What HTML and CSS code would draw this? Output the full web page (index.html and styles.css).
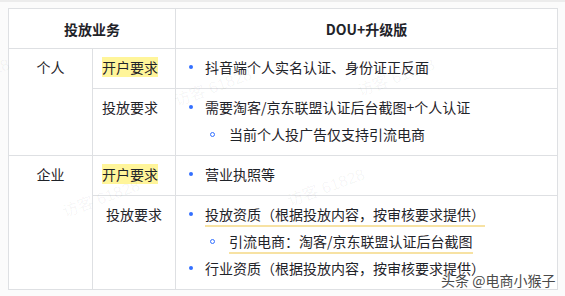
FILE: index.html
```html
<!DOCTYPE html>
<html lang="zh">
<head>
<meta charset="utf-8">
<link rel="stylesheet" href="styles.css">
</head>
<body>
<div class="wrap">
<table class="grid">
  <colgroup><col class="c1"><col class="c2"><col class="c3"></colgroup>
  <thead>
    <tr class="r-head"><th colspan="2">投放业务</th><th>DOU+升级版</th></tr>
  </thead>
  <tbody>
    <tr class="r-short">
      <td class="who" rowspan="2">个人</td>
      <td class="lab"><span class="hl">开户要求</span></td>
      <td class="cnt"><ul class="list"><li>抖音端个人实名认证、身份证正反面</li></ul></td>
    </tr>
    <tr class="r-mid">
      <td class="lab">投放要求</td>
      <td class="cnt"><ul class="list"><li>需要淘客/京东联盟认证后台截图+个人认证
        <ul class="sub"><li>当前个人投广告仅支持引流电商</li></ul></li></ul></td>
    </tr>
    <tr class="r-short">
      <td class="who" rowspan="2">企业</td>
      <td class="lab"><span class="hl">开户要求</span></td>
      <td class="cnt"><ul class="list"><li>营业执照等</li></ul></td>
    </tr>
    <tr class="r-long">
      <td class="lab lab-in">投放要求</td>
      <td class="cnt"><ul class="list">
        <li><span class="ul">投放资质（根据投放内容，按审核要求提供）</span>
          <ul class="sub"><li><span class="ul">引流电商：淘客/京东联盟认证后台截图</span></li></ul></li>
        <li>行业资质（根据投放内容，按审核要求提供）</li>
      </ul></td>
    </tr>
  </tbody>
</table>
<span class="wm wm1">访客 61828</span>
<span class="wm wm2">访客 61828</span>
<span class="wm wm3">访客 61828</span>
<span class="wm wm4">访客 61828</span>
<span class="wm wm5">访客 61828</span>
<span class="brand">头条 @电商小猴子</span>
</div>
</body>
</html>
```
FILE: styles.css
```css
html, body {
  margin: 0;
  padding: 0;
}
body {
  background: #fbfbfb;
  border-top: 2px solid #ececec;
  height: 294px;
  overflow: hidden;
  font-family: "Noto Sans CJK SC", "Noto Sans", sans-serif;
  font-size: 14px;
  color: #1f2329;
}
.wrap {
  position: relative;
  padding: 6px 0 0 8px;
}
.grid {
  border-collapse: collapse;
  table-layout: fixed;
  width: 549px;
  background: #fff;
}
.c1 { width: 84px; }
.c2 { width: 83px; }
.c3 { width: 382px; }
.grid th, .grid td {
  border: 1px solid #dee0e3;
  padding: 0;
  line-height: 26px;
}
.grid th {
  font-weight: 700;
  text-align: center;
  height: 39px;
  color: #1f2329;
}
.grid td {
  vertical-align: top;
  padding-top: 5px;
}
.r-short td { height: 34px; }
.r-mid td { height: 61px; }
.r-long td { height: 88px; }
.who {
  text-align: center;
}
.grid td.lab {
  padding-left: 9px;
}
.grid td.lab-in { padding-left: 13px; }
.hl {
  background: #fff59a;
}
.list, .sub {
  list-style: none;
  margin: 0;
  padding: 0;
}
.list > li {
  position: relative;
  padding-left: 29px;
}
.list > li::before {
  content: "";
  position: absolute;
  left: 13px;
  top: 11px;
  width: 4px;
  height: 4px;
  border-radius: 50%;
  background: #3370ff;
}
.sub > li {
  position: relative;
  padding-left: 24px;
  margin-top: 1px;
}
.sub > li::before {
  content: "";
  position: absolute;
  left: 5px;
  top: 11px;
  width: 3px;
  height: 3px;
  border-radius: 50%;
  border: 1px solid #3370ff;
  background: #fff;
}
.list > li + li {
  margin-top: 1px;
}
.ul {
  border-bottom: 2px solid #f7e2a3;
  padding-bottom: 1px;
}
.wm {
  position: absolute;
  font-family: "Liberation Sans", "Noto Sans CJK SC", sans-serif;
  font-size: 16px;
  color: rgba(0, 0, 0, 0.045);
  transform: rotate(-20deg);
  white-space: nowrap;
  pointer-events: none;
}
.wm1 { left: 355px; top: 62px; }
.wm2 { left: 60px; top: 183px; }
.wm3 { left: 285px; top: 172px; }
.wm4 { left: -70px; top: 62px; }
.wm5 { left: 172px; top: 72px; }
.brand {
  position: absolute;
  left: 441px;
  top: 268px;
  font-size: 14px;
  line-height: 20px;
  color: #4a4a4a;
  white-space: nowrap;
  text-shadow: 0 0 2px #fff, 0 0 2px #fff, 0 0 3px #fff;
}
```
